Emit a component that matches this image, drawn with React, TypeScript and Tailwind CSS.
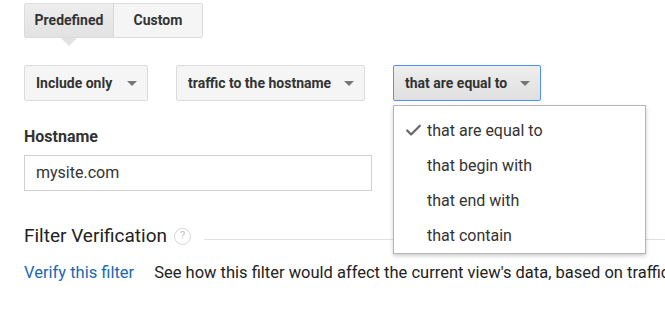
import { Check } from 'lucide-react';

function Caret() {
  return (
    <svg width="10" height="5" viewBox="0 0 10 5" className="ml-auto">
      <path d="M0 0h10L5 5z" fill="#777" />
    </svg>
  );
}

function Select({ label, width, active }: { label: string; width: string; active?: boolean }) {
  return (
    <div
      className={`flex items-center h-[36px] pl-[11px] pr-[10px] rounded-[2px] text-[14px] font-bold text-[#333] ${width} ${
        active
          ? 'border border-[#4d90fe] bg-gradient-to-b from-[#eeeeee] to-[#e0e0e0]'
          : 'border border-[#dcdcdc] bg-[#f5f5f5]'
      }`}
    >
      <span>{label}</span>
      <Caret />
    </div>
  );
}

export default function App() {
  const options = ['that are equal to', 'that begin with', 'that end with', 'that contain'];

  return (
    <div
      className="relative w-[665px] h-[309px] overflow-hidden bg-white text-[#222]"
      style={{ fontFamily: 'Roboto, "Liberation Sans", sans-serif' }}
    >
      <div className="pl-[24px] pt-[3px]">
        {/* tabs */}
        <div className="relative flex w-fit h-[35px] border border-[#dcdcdc] rounded-[2px] text-[14px] font-bold text-[#333]">
          <div className="relative flex items-center justify-center w-[89px] bg-gradient-to-b from-[#eeeeee] to-[#e2e2e2] border-r border-[#d8d8d8]">
            Predefined
            <span className="absolute left-[36px] top-[34px] w-0 h-0 border-x-[8px] border-x-transparent border-t-[8px] border-t-[#e2e2e2]" />
          </div>
          <div className="flex items-center justify-center w-[88px] bg-[#f5f5f5]">Custom</div>
        </div>

        {/* selects */}
        <div className="flex gap-[28px] mt-[27px]">
          <Select label="Include only" width="w-[124px]" />
          <Select label="traffic to the hostname" width="w-[189px]" />
          <Select label="that are equal to" width="w-[148px]" active />
        </div>

        {/* hostname */}
        <div className="mt-[24px] text-[16px] font-bold text-[#333]">Hostname</div>
        <div className="mt-[6px] flex items-center w-[348px] h-[36px] border border-[#d0d0d0] px-[11px] text-[16px] text-[#333]">
          mysite.com
        </div>

        {/* filter verification */}
        <div className="flex items-center mt-[33px] h-[24px]">
          <span className="text-[19px] text-[#222]">Filter Verification</span>
          <span className="ml-[7px] flex items-center justify-center w-[17px] h-[17px] rounded-full border border-[#d5d5d5] text-[11px] text-[#c0c0c0]">
            ?
          </span>
          <div className="ml-[13px] mt-[6px] flex-1 h-px bg-[#e0e0e0]" />
        </div>

        <div className="flex mt-[13px] text-[16.5px] whitespace-nowrap">
          <span className="text-[#1a67b5]">Verify this filter</span>
          <span className="ml-[20px] text-[#222]">
            See how this filter would affect the current view's data, based on traffic
          </span>
        </div>
      </div>

      {/* open dropdown menu */}
      <div className="absolute left-[393px] top-[105px] w-[253px] pt-[7px] bg-white border border-[#b5b5b5] shadow-[0_2px_4px_rgba(0,0,0,0.2)]">
        {options.map((o, i) => (
          <div key={o} className="flex items-center h-[35px] text-[16px] text-[#333]">
            <span className="w-[33px] flex justify-end pr-[4px]">
              {i === 0 && <Check size={19} strokeWidth={2.75} color="#666" />}
            </span>
            <span>{o}</span>
          </div>
        ))}
      </div>
    </div>
  );
}
